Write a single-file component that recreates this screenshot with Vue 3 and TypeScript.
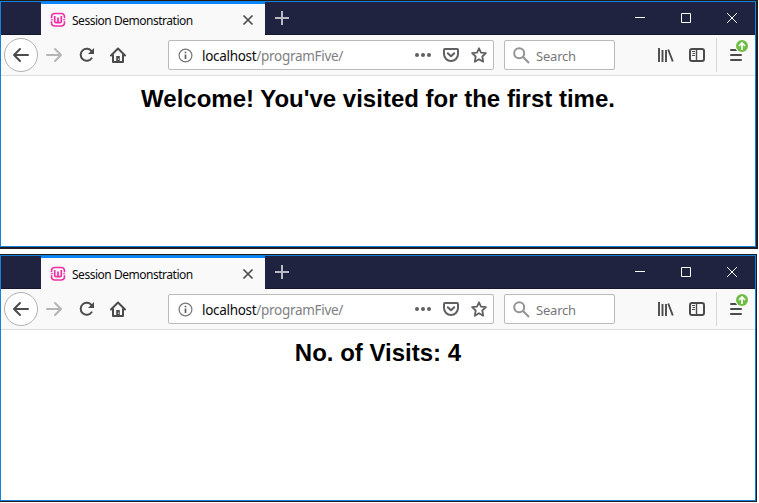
<script setup lang="ts">
interface BrowserWindow {
  id: string
  title: string
  message: string
}

const windows: BrowserWindow[] = [
  { id: 'first', title: 'Session Demonstration', message: "Welcome! You've visited for the first time." },
  { id: 'second', title: 'Session Demonstration', message: 'No. of Visits: 4' },
]
</script>

<template>
  <main class="page">
    <div v-for="w in windows" :key="w.id" class="frame" :class="w.id">
      <section class="window">
        <header class="titlebar">
          <div class="tab">
            <svg class="favicon" width="16" height="16" viewBox="0 0 16 16" fill="none" stroke="#ee2fa5">
              <path d="M1.500 6.300V5Q1.500 1.500 5 1.500H11Q14.500 1.500 14.500 5V6.300M1.500 9.200V10.500Q1.500 14 5 14H11Q14.500 14 14.500 10.500V9.200" stroke-width="1.600" />
              <path d="M.8 7.750H3M13 7.750H15.200" stroke-width="1" />
              <path d="M4.700 4V9.500Q4.700 10.700 6 10.700H10Q11.300 10.700 11.300 9.500V4M8 5.500V10.700" stroke-width="1.700" />
            </svg>
            <span class="tab-title">{{ w.title }}</span>
            <svg class="tab-close" width="12" height="12" viewBox="0 0 12 12" fill="none" stroke="#4c4c4e" stroke-width="1.700">
              <path d="M1.500 1.500L10.500 10.500M10.500 1.500L1.500 10.500" />
            </svg>
          </div>
          <svg class="new-tab" width="14" height="14" viewBox="0 0 14 14" fill="none" stroke="#b9bac4" stroke-width="2">
            <path d="M7 0V14M0 7H14" />
          </svg>
          <div class="controls">
            <svg width="46" height="32" viewBox="0 0 46 32" stroke="#fff"><path d="M18 15.500H28" /></svg>
            <svg width="46" height="32" viewBox="0 0 46 32" stroke="#fff" fill="none"><path d="M18.500 11.500H27.500V20.500H18.500Z" /></svg>
            <svg width="46" height="32" viewBox="0 0 46 32" stroke="#fff"><path d="M18 11L28 21M28 11L18 21" /></svg>
          </div>
        </header>
        <nav class="toolbar">
          <span class="back">
            <svg width="18" height="16" viewBox="0 0 18 16" fill="none" stroke="#4b4b4c" stroke-width="2" stroke-linecap="round" stroke-linejoin="round"><path d="M2 8H16M8 2L2 8L8 14" /></svg>
          </span>
          <svg class="forward" width="18" height="16" viewBox="0 0 18 16" fill="none" stroke="#b5b5b6" stroke-width="2" stroke-linecap="round" stroke-linejoin="round"><path d="M2 8H16M10 2L16 8L10 14" /></svg>
          <svg class="reload" width="16" height="16" viewBox="0 0 16 16" fill="none"><path d="M12.500 4.200A6 6 0 1 0 12.600 11.200" stroke="#4b4b4c" stroke-width="2" stroke-linecap="round" /><path d="M15 1V7H9Z" fill="#4b4b4c" /></svg>
          <svg class="home" width="18" height="16" viewBox="0 0 18 16" fill="none" stroke="#4b4b4c" stroke-width="2" stroke-linecap="round" stroke-linejoin="round"><path d="M2 8.500L9 1.500L16 8.500M4 8V15H14V8" /><path d="M9 15V9" stroke-width="3.600" stroke-linecap="butt" /><path d="M9.400 11.500V13" stroke="#f9f9fa" stroke-width=".8" stroke-linecap="butt" /></svg>
          <div class="urlbar">
            <svg class="info" width="15" height="15" viewBox="0 0 15 15"><circle cx="7.500" cy="7.500" r="6.400" fill="none" stroke="#77777a" stroke-width="1.200" /><path d="M7.500 6.500V11M7.500 3.700V5.300" stroke="#606063" stroke-width="1.700" /></svg>
            <span class="url">localhost<span class="path">/programFive/</span></span>
            <svg class="dots" width="16" height="4" viewBox="0 0 16 4" fill="#606063"><circle cx="2" cy="2" r="2" /><circle cx="8" cy="2" r="2" /><circle cx="14" cy="2" r="2" /></svg>
            <svg class="pocket" width="16" height="14" viewBox="0 0 16 14" fill="none" stroke="#606063" stroke-width="2" stroke-linecap="round" stroke-linejoin="round"><path d="M2 1H14Q15 1 15 2V6A7 7 0 0 1 1 6V2Q1 1 2 1Z" /><path d="M4.800 5.200L8 8.200L11.200 5.200" /></svg>
            <svg class="star" width="16" height="16" viewBox="0 0 16 16" fill="none" stroke="#606063" stroke-width="1.800" stroke-linejoin="round"><path d="M8 1.300L10 5.600L14.900 6.200L11.300 9.500L12.200 14.700L8 12.200L3.800 14.700L4.700 9.500L1.100 6.200L6 5.600Z" /></svg>
          </div>
          <div class="searchbar">
            <svg width="17" height="17" viewBox="0 0 17 17" fill="none" stroke="#939395" stroke-width="2"><circle cx="6.200" cy="6.200" r="5" /><path d="M9.800 9.800L16 16" /></svg>
            <span class="placeholder">Search</span>
          </div>
          <svg class="library" width="16" height="14" viewBox="0 0 16 14" fill="none" stroke="#4b4b4c"><path d="M1 0V14M4.500 2V14M8 2V14M10.200 1.500L14.800 13.500" stroke-width="1.900" /></svg>
          <svg class="sidebar" width="16" height="14" viewBox="0 0 16 14" fill="none" stroke="#4b4b4c"><rect x="1" y="1" width="14" height="12" rx="2" stroke-width="2" /><path d="M7.500 1V13" stroke-width="1.400" /><path d="M3 3.500H6M3.500 5.500H6M3 7.500H6" /></svg>
          <span class="separator"></span>
          <div class="menu">
            <svg width="12" height="12" viewBox="0 0 12 12" stroke="#4b4b4c" stroke-width="2" stroke-linecap="round"><path d="M1 1H11M1 6H11M1 11H11" /></svg>
            <svg class="update" width="14" height="14" viewBox="0 0 14 14"><circle cx="7" cy="7" r="7" fill="#f9f9fa" /><circle cx="7" cy="7" r="6" fill="#70bd45" /><path d="M7 11V4M4 7L7 4L10 7" fill="none" stroke="#fff" stroke-width="1.700" /></svg>
          </div>
        </nav>
        <article class="content"><h2>{{ w.message }}</h2></article>
      </section>
    </div>
  </main>
</template>

<style>
body {
  margin: 0;
  background: #fff;
}
</style>

<style scoped>
.page {
  width: 759px;
  height: 503px;
  overflow: hidden;
  display: flex;
  flex-direction: column;
  align-items: flex-start;
  gap: 5px;
}
.frame {
  box-sizing: border-box;
  width: 758px;
  height: 249px;
  padding: 1px 2px 2px 0;
  background: #1d1c1f;
}
.frame.second {
  width: 757px;
  height: 248px;
  padding: 1px 1px 1px 0;
}
.window {
  box-sizing: border-box;
  width: 756px;
  height: 246px;
  border: 1px solid #1581db;
  background: #fff;
}
.titlebar {
  box-sizing: border-box;
  height: 33px;
  padding-left: 40px;
  display: flex;
  background: #202340;
  box-shadow: inset 0 -1px #15172c;
}
.tab {
  box-sizing: border-box;
  width: 224px;
  height: 33px;
  padding-left: 9px;
  display: flex;
  align-items: center;
  border-top: 2px solid #0a84ff;
  background: #f9f9fa;
}
.tab-title {
  width: 121px;
  margin-left: 6px;
  padding-top: 2px;
  font: 12px/16px "Noto Sans", "Open Sans", sans-serif;
  letter-spacing: -0.480px;
  white-space: nowrap;
  color: #0c0c0d;
}
.tab-close {
  margin-left: 49px;
}
.new-tab {
  margin: 9px 0 0 10px;
}
.controls {
  display: flex;
  margin-left: auto;
}
.toolbar {
  box-sizing: border-box;
  height: 41px;
  padding-left: 3px;
  display: flex;
  align-items: center;
  background: #f9f9fa;
  border-bottom: 1px solid #dededf;
}
.back {
  box-sizing: border-box;
  width: 34px;
  height: 34px;
  display: flex;
  align-items: center;
  justify-content: center;
  border: 1px solid #b1b1b3;
  border-radius: 50%;
  background: #fff;
}
.forward {
  margin-left: 7px;
}
.reload {
  margin-left: 16px;
}
.home {
  margin-left: 14px;
}
.urlbar,
.searchbar {
  box-sizing: border-box;
  height: 30px;
  display: flex;
  align-items: center;
  border: 1px solid #bababb;
  border-radius: 2px;
  background: #fff;
  font: 13.500px/20px "Noto Sans", "Open Sans", sans-serif;
}
.urlbar {
  width: 326px;
  margin-left: 41px;
  padding-left: 9px;
}
.url {
  width: 142px;
  margin-left: 9px;
  padding-top: 2px;
  letter-spacing: -0.300px;
  white-space: nowrap;
  color: #0c0c0d;
}
.path {
  color: #808083;
}
.dots {
  margin-left: 71px;
}
.pocket {
  margin-left: 12px;
}
.star {
  margin-left: 12px;
}
.searchbar {
  width: 111px;
  margin-left: 10px;
  padding-left: 8px;
}
.placeholder {
  margin-left: 6px;
  padding-top: 2px;
  font-size: 13px;
  letter-spacing: -0.200px;
  color: #777779;
}
.library {
  margin-left: 43px;
}
.sidebar {
  margin-left: 15px;
}
.separator {
  width: 1px;
  height: 34px;
  margin-left: 11px;
  background: #d7d7d8;
}
.menu {
  position: relative;
  height: 12px;
  margin-left: 13px;
  display: flex;
}
.update {
  position: absolute;
  left: 5px;
  top: -10px;
}
.content {
  height: 170px;
  display: flex;
  justify-content: center;
}
h2 {
  margin: 9px 0 0;
  font: bold 24px/28px "Liberation Sans", Arial, sans-serif;
  white-space: nowrap;
  color: #000;
}
</style>
